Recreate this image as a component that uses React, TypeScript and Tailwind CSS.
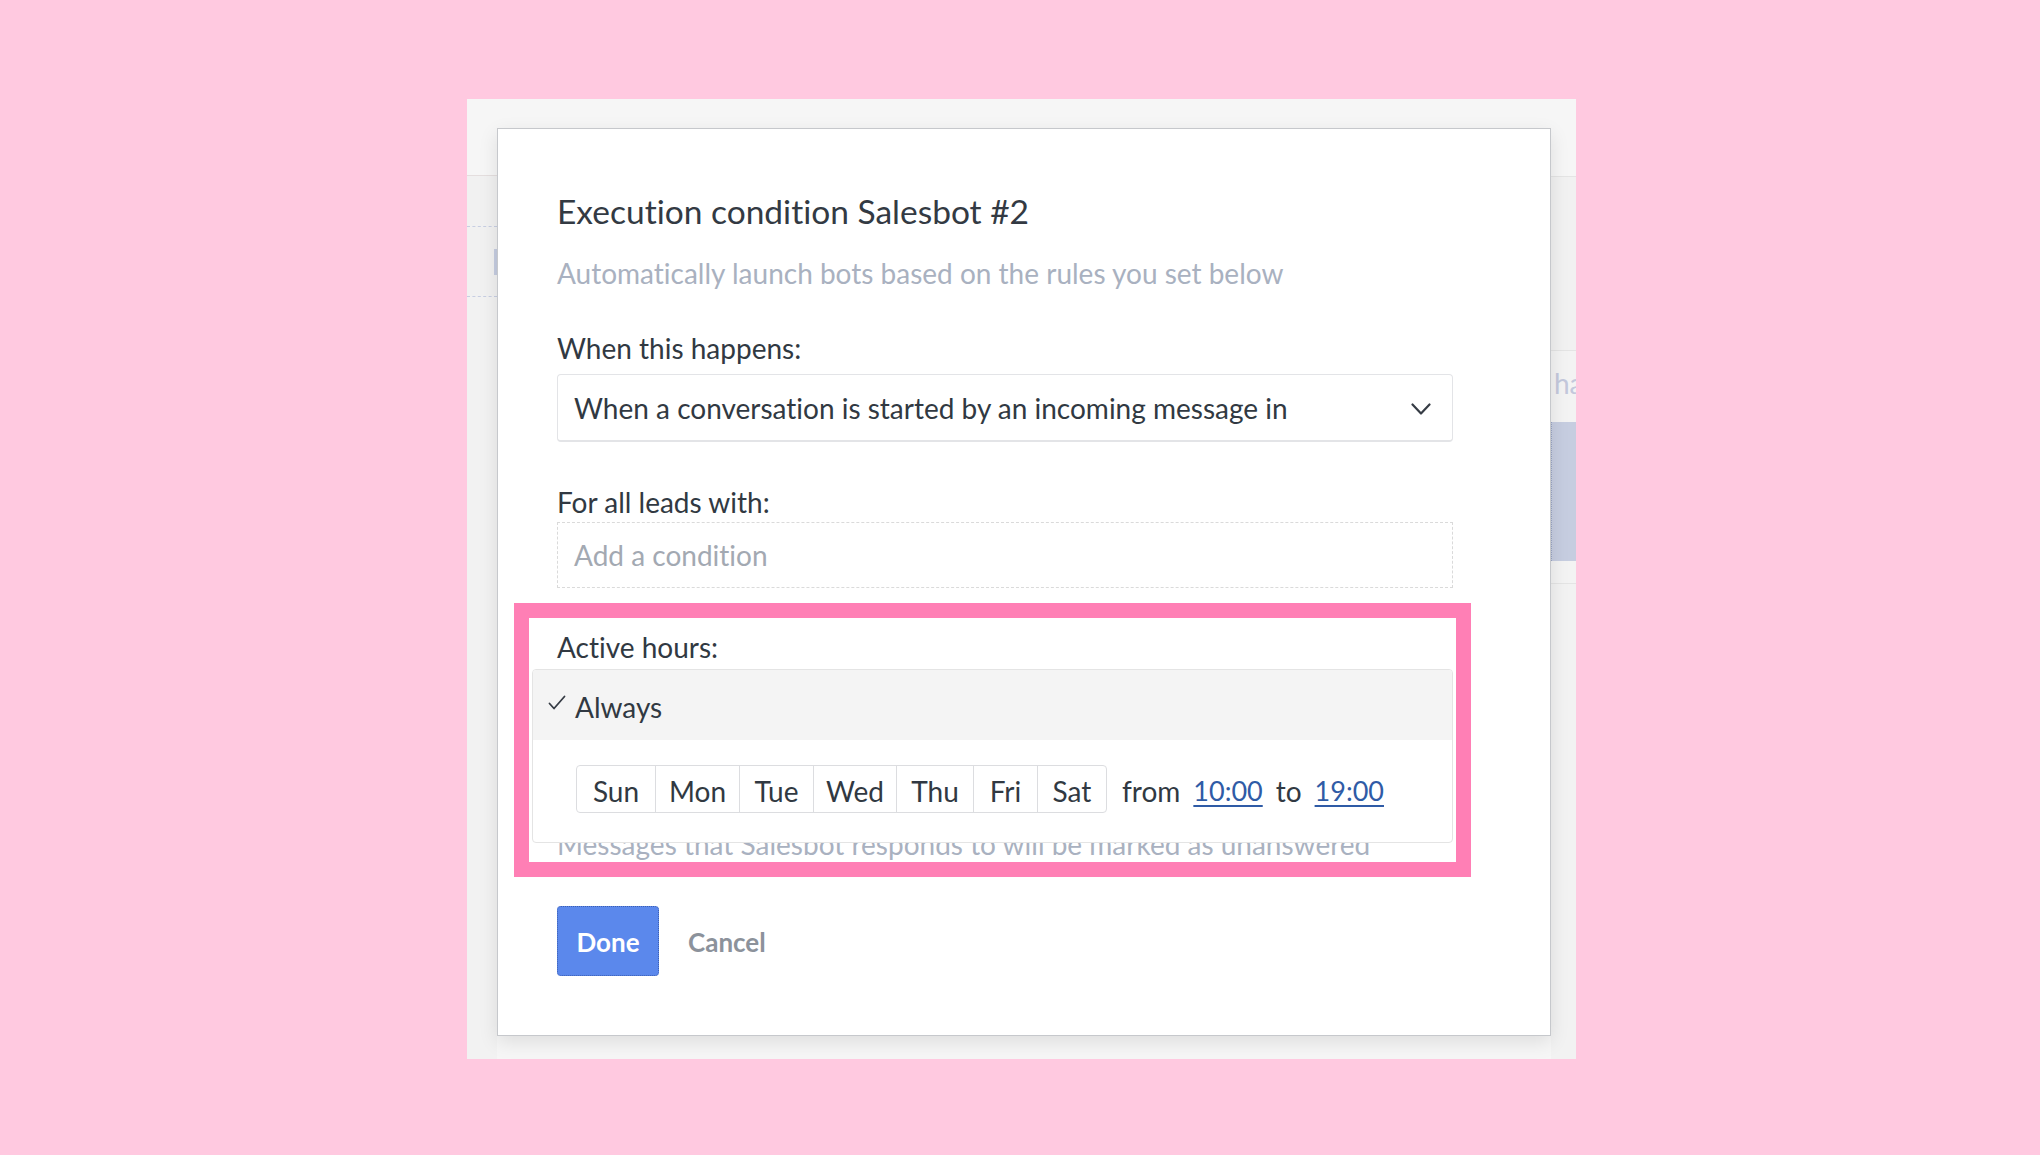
import React from "react";

const days = [
  { d: "Sun", w: "w-[78px]" },
  { d: "Mon", w: "w-[84px]" },
  { d: "Tue", w: "w-[74px]" },
  { d: "Wed", w: "w-[83px]" },
  { d: "Thu", w: "w-[77px]" },
  { d: "Fri", w: "w-[64px]" },
  { d: "Sat", w: "w-[69px]" },
];

function Chevron() {
  return (
    <svg width="20" height="13" viewBox="0 0 20 13" fill="none" className="mt-[4px]">
      <polyline points="1.5,1.5 10,10.5 18.5,1.5" stroke="#363c45" strokeWidth="2.2" strokeLinecap="round" strokeLinejoin="round" />
    </svg>
  );
}

function Check() {
  return (
    <svg width="18" height="16" viewBox="0 0 18 16" fill="none">
      <polyline points="1.5,8.5 6,13.5 16.5,1.5" stroke="#363c45" strokeWidth="1.8" strokeLinecap="round" strokeLinejoin="round" />
    </svg>
  );
}

export default function App() {
  return (
    <div className="flex h-[1155px] w-[2040px] items-start bg-[#ffc9e0] font-['Lato',sans-serif] text-[#313942] [font-variant-ligatures:none]">
      {/* screenshot of the app behind the modal */}
      <div className="ml-[467px] mt-[99px] flex h-[960px] w-[1109px] overflow-hidden bg-[#f6f6f6]">
        {/* left strip */}
        <div className="flex w-[30px] shrink-0 flex-col">
          <div className="h-[77px] shrink-0 border-b border-[#e4dede]" />
          <div className="h-[51px] shrink-0 border-b border-dashed border-[#c7cee2] bg-[#f1f1f1]" />
          <div className="flex h-[70px] shrink-0 justify-end border-b border-dashed border-[#c7cee2] bg-[#f1f1f1] pt-[22px]">
            <div className="h-[26px] w-[3px] bg-[#c5cce0]" />
          </div>
          <div className="flex-1 bg-[#f2f2f2]" />
        </div>

        {/* modal */}
        <div className="relative mt-[29px] flex h-[908px] w-[1054px] shrink-0 flex-col border border-[#c6c8cc] bg-white pl-[59px] shadow-[0_6px_18px_rgba(0,0,0,0.10)]">
          <div className="mt-[62px] text-[33.5px] leading-[40px] text-[#333a43]">Execution condition Salesbot #2</div>
          <div className="mt-[24px] text-[28px] leading-[36px] text-[#a9b1c0]">Automatically launch bots based on the rules you set below</div>

          <div className="mt-[39px] text-[28px] leading-[36px]">When this happens:</div>
          <div className="mt-[8px] flex h-[68px] w-[896px] items-center justify-between rounded-[4px] border border-b-2 border-[#e3e4e7] pl-[16px] pr-[21px]">
            <span className="text-[28px] leading-[36px]">When a conversation is started by an incoming message in</span>
            <Chevron />
          </div>

          <div className="mt-[42px] text-[28px] leading-[36px]">For all leads with:</div>
          <div className="mt-[2px] flex h-[66px] w-[896px] items-center border border-dashed border-[#dadada] pl-[16px]">
            <span className="text-[28px] leading-[36px] text-[#a3a9b2]">Add a condition</span>
          </div>

          <div className="mt-[41px] text-[28px] leading-[36px]">Active hours:</div>
          <div className="relative mt-[4px] w-[896px]">
            <div className="mt-[157px] text-[28px] leading-[36px] text-[#a9b1c0]">Messages that Salesbot responds to will be marked as unanswered</div>

            {/* open dropdown */}
            <div className="absolute left-[-25px] right-0 top-0 h-[174px] overflow-hidden rounded-[4px] border border-[#e4e4e4] bg-white">
              <div className="flex h-[70px] items-center bg-[#f4f4f4] pl-[15px] pt-[4px]">
                <span className="-mt-[8px] mr-[9px]"><Check /></span>
                <span className="text-[28px] leading-[36px]">Always</span>
              </div>
              <div className="flex items-center pl-[43px] pt-[25px]">
                <div className="flex h-[48px] overflow-hidden rounded-[4px] border border-[#dcdde0]">
                  {days.map((x, i) => (
                    <div key={x.d} className={`${x.w} flex items-center justify-center pt-[3px] text-[28px] leading-[36px] ${i > 0 ? "border-l border-[#dcdde0]" : ""}`}>{x.d}</div>
                  ))}
                </div>
                <div className="ml-[15px] flex items-center gap-[13px] pt-[3px] text-[28px] leading-[36px]">
                  <span>from</span>
                  <span className="text-[27px] text-[#2f5ba6] underline decoration-[2px] underline-offset-[4px]">10:00</span>
                  <span>to</span>
                  <span className="text-[27px] text-[#2f5ba6] underline decoration-[2px] underline-offset-[4px]">19:00</span>
                </div>
              </div>
            </div>
          </div>

          <div className="mt-[44px] flex items-center">
            <button className="h-[70px] w-[102px] rounded-[4px] border border-dotted border-[#3c5fb2] bg-[#5b88ec] pt-[2px] text-[26px] font-bold text-white">Done</button>
            <span className="ml-[29px] pt-[2px] text-[26px] font-bold text-[#8c929b]">Cancel</span>
          </div>

          {/* highlight frame */}
          <div className="pointer-events-none absolute left-[16px] top-[474px] h-[274px] w-[957px] border-[15px] border-[#ff7fb5]" />
        </div>

        {/* right strip */}
        <div className="flex w-[25px] shrink-0 flex-col">
          <div className="h-[78px] shrink-0 border-b border-[#e4e4e4]" />
          <div className="h-[174px] shrink-0 border-b border-[#e4e4e4] bg-[#f1f1f1]" />
          <div className="h-[71px] shrink-0 overflow-hidden whitespace-nowrap bg-[#f3f3f3] pl-[3px] pt-[14px] text-[28px] leading-[36px] text-[#c3c8dc]">ha</div>
          <div className="h-[139px] shrink-0 border-l border-dotted border-[#9aa4c4] bg-[#c6cde0]" />
          <div className="h-[23px] shrink-0 border-b border-[#e4e4e4] bg-[#f3f3f3]" />
          <div className="flex-1 bg-[#f2f2f2]" />
        </div>
      </div>
    </div>
  );
}
